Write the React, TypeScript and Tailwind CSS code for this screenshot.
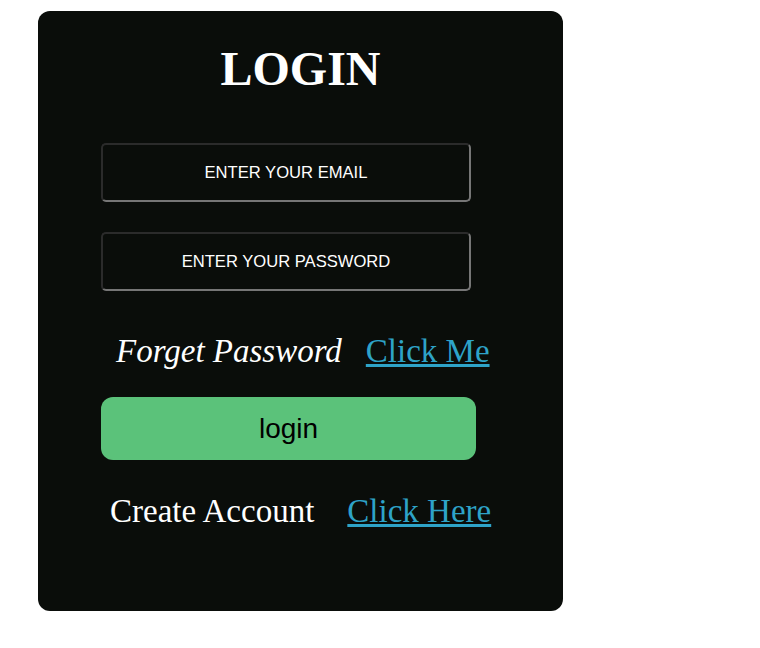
import React from 'react';

const serif = { fontFamily: '"Liberation Serif", "Times New Roman", serif' };
const sans = { fontFamily: '"Liberation Sans", Arial, sans-serif' };

const Field: React.FC<{ label: string; type: string }> = ({ label, type }) => (
  <input
    type={type}
    placeholder={label}
    style={sans}
    className="w-[370px] h-[59px] rounded-[5px] border-2 border-t-[#2b2b2b] border-l-[#2b2b2b] border-r-[#767676] border-b-[#767676] bg-[#0a0d0a] text-center text-[16.6px] text-white placeholder:text-white outline-none"
  />
);

const App: React.FC = () => {
  return (
    <div className="min-h-[648px] bg-white pt-[11px] pl-[38px]">
      <div className="w-[525px] h-[600px] rounded-[12px] bg-[#0a0d0a] pt-[30px]">
        <h1 style={serif} className="text-center text-[48px] font-bold leading-[55px] text-white">
          LOGIN
        </h1>

        <div className="pl-[63px]">
          <div className="mt-[47px] flex flex-col gap-[30px]">
            <Field label="ENTER YOUR EMAIL" type="email" />
            <Field label="ENTER YOUR PASSWORD" type="password" />
          </div>

          <div style={serif} className="mt-[41px] flex items-baseline text-[33px] leading-[38px] text-white">
            <span className="ml-[15px] italic">Forget Password</span>
            <a href="#" className="ml-[24px] text-[#2ea3c8] underline">Click Me</a>
          </div>

          <button
            style={sans}
            className="mt-[27px] w-[375px] h-[63px] rounded-[12px] bg-[#5bc27a] text-[28px] text-black"
          >
            login
          </button>

          <div style={serif} className="mt-[32px] flex items-baseline text-[33px] leading-[38px] text-white">
            <span className="ml-[9px]">Create Account</span>
            <a href="#" className="ml-[33px] text-[#2ea3c8] underline">Click Here</a>
          </div>
        </div>
      </div>
    </div>
  );
};

export default App;
